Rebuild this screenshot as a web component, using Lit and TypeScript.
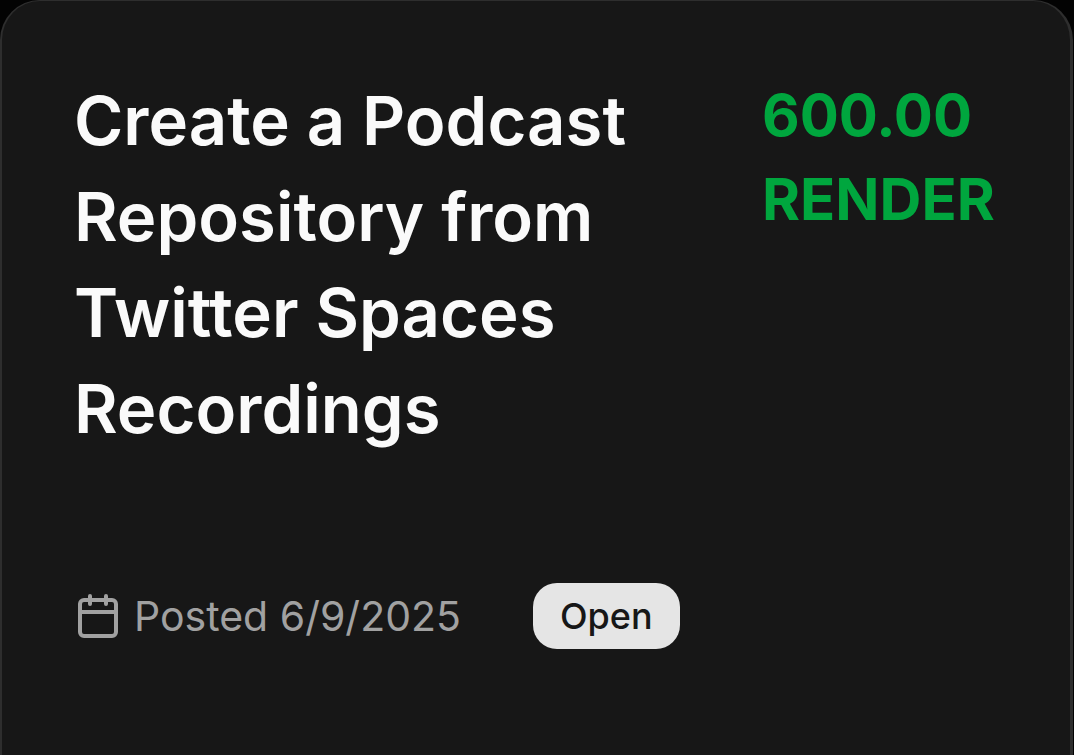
import { LitElement, html, css } from "lit";
import { customElement } from "lit/decorators.js";

@customElement("app-root")
export class AppRoot extends LitElement {
  static styles = css`
    :host {
      display: block;
      min-height: 100vh;
      background: #030303;
      font-family: Inter, sans-serif;
      color: #fafafa;
    }
    .card {
      box-sizing: border-box;
      min-height: 100vh;
      margin-right: 1px;
      padding: 72px;
      background: #171717;
      border: solid #2e2e2e;
      border-width: 1px 3px 0 2px;
      border-radius: 40px 40px 0 0;
    }
    .head {
      display: flex;
      justify-content: space-between;
      align-items: flex-start;
      gap: 48px;
    }
    .title {
      margin: 0;
      max-width: 600px;
      font-size: 67px;
      line-height: 96px;
      font-weight: 600;
    }
    .reward {
      margin: 0;
      width: 236px;
      font-size: 58px;
      line-height: 84px;
      font-weight: 700;
      color: #00a63e;
    }
    .meta {
      display: flex;
      align-items: center;
      gap: 72px;
      margin-top: 126px;
    }
    .posted {
      display: flex;
      align-items: center;
      gap: 12px;
      font-size: 41px;
      line-height: 60px;
      color: #a1a1a1;
    }
    .status {
      padding: 9px 27px;
      border-radius: 24px;
      background: #e5e5e5;
      color: #171717;
      font-size: 36px;
      line-height: 48px;
      font-weight: 500;
    }
  `;

  render() {
    return html`
      <article class="card">
        <header class="head">
          <h2 class="title">Create a Podcast Repository from Twitter Spaces Recordings</h2>
          <p class="reward">600.00 RENDER</p>
        </header>
        <div class="meta">
          <span class="posted">
            <svg width="48" height="48" viewBox="0 0 24 24" fill="none" stroke="currentColor" stroke-width="2" stroke-linecap="round" stroke-linejoin="round" aria-hidden="true">
              <path d="M8 2v4M16 2v4M3 10h18" />
              <rect x="3" y="4" width="18" height="18" rx="2" />
            </svg>
            <span>Posted 6/9/2025</span>
          </span>
          <span class="status">Open</span>
        </div>
      </article>
    `;
  }
}
